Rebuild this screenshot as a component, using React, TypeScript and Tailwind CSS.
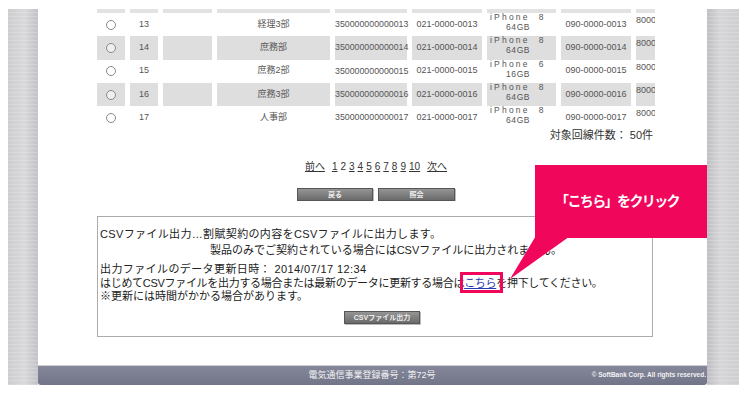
type Line = { no: number; dept: string; model: string; cap: string };

const lines: Line[] = [
  { no: 13, dept: "経理3部", model: "8", cap: "64GB" },
  { no: 14, dept: "庶務部", model: "8", cap: "64GB" },
  { no: 15, dept: "庶務2部", model: "6", cap: "16GB" },
  { no: 16, dept: "庶務3部", model: "8", cap: "64GB" },
  { no: 17, dept: "人事部", model: "8", cap: "64GB" },
];

const pad = (n: number) => String(n).padStart(4, "0");

function Row({ line }: { line: Line }) {
  const bg = line.no % 2 === 0 ? "bg-[#dedede]" : "bg-white";
  return (
    <div className="flex h-[23.3px] gap-[5px] text-[9px] text-[#555]">
      <div className={`${bg} flex w-[28px] shrink-0 items-center justify-center`}>
        <span className="h-[10px] w-[10px] rounded-full border border-[#8a8a8a] bg-white/50" />
      </div>
      <div className={`${bg} flex w-[28px] shrink-0 items-center justify-center`}>{line.no}</div>
      <div className={`${bg} w-[49px] shrink-0`} />
      <div className={`${bg} flex w-[113px] shrink-0 items-center justify-center`}>{line.dept}</div>
      <div className={`${bg} flex w-[72px] shrink-0 items-center whitespace-nowrap text-[8.8px]`}>
        3500000000000{String(line.no).padStart(2, "0")}
      </div>
      <div className={`${bg} flex w-[70px] shrink-0 items-center justify-center whitespace-nowrap`}>
        021-0000-{pad(line.no)}
      </div>
      <div className={`${bg} w-[69px] shrink-0 whitespace-nowrap text-[8.5px] leading-[10px]`}>
        <div className="-mt-[1px] pl-[3px] tracking-[2.2px]">iPhone&nbsp;&nbsp;{line.model}</div>
        <div className="pl-[19px] tracking-[0.6px]">{line.cap}</div>
      </div>
      <div className={`${bg} flex w-[70px] shrink-0 items-center justify-center whitespace-nowrap`}>
        090-0000-{pad(line.no)}
      </div>
      <div className={`${bg} w-[40px] shrink-0 whitespace-nowrap pt-[2px] leading-[10px]`}>80000</div>
    </div>
  );
}

function GrayButton({ label, width }: { label: string; width: string }) {
  return (
    <div
      className={`${width} flex h-[13px] items-center justify-center border border-[#555] bg-[linear-gradient(#959595,#6a6a6a)] text-[7px] font-bold leading-none text-[#eee] shadow-[1px_1px_0_#bbb]`}
    >
      {label}
    </div>
  );
}

const bandLeft =
  "bg-[repeating-linear-gradient(0deg,rgba(255,255,255,0.18)_0px,rgba(255,255,255,0.18)_1px,transparent_1px,transparent_4px),linear-gradient(90deg,#cdcdd0,#d9d9dc_55%,#c3c3c7)]";
const bandRight =
  "bg-[repeating-linear-gradient(0deg,rgba(255,255,255,0.18)_0px,rgba(255,255,255,0.18)_1px,transparent_1px,transparent_4px),linear-gradient(90deg,#bfbfc3,#d6d6d9_40%,#cfcfd2)]";

export default function App() {
  return (
    <div className="h-[396px] w-[750px] overflow-hidden bg-white pl-[8px] pt-[9px] font-['Liberation_Sans','Noto_Sans_CJK_JP',sans-serif]">
      <div className="flex h-[376px]">
        <div className={`${bandLeft} w-[30px] shrink-0`} />

        <div className="relative flex w-[669px] shrink-0 flex-col bg-white">
          <div className="flex-1">
            {/* table */}
            <div className="ml-[59px] w-[558px] overflow-hidden">
              <div className="flex h-[4px] gap-[5px]">
                {["w-[28px]", "w-[28px]", "w-[49px]", "w-[113px]", "w-[72px]", "w-[70px]", "w-[69px]", "w-[70px]", "w-[40px]"].map(
                  (w, i) => (
                    <div key={i} className={`${w} shrink-0 bg-[#e2e2e2]`} />
                  )
                )}
              </div>
              {lines.map((l) => (
                <Row key={l.no} line={l} />
              ))}
              <div className="pr-[2px] text-right text-[11px] leading-[12px] text-[#333]">対象回線件数： 50件</div>

              <div className="mt-[19px] flex items-center justify-center text-[10px] leading-[14px] text-[#333]">
                <span className="underline">前へ</span>
                <div className="ml-[7px] flex gap-[3px]">
                  {[1, 2, 3, 4, 5, 6, 7, 8, 9, 10].map((p) => (
                    <span key={p} className={p === 2 ? "" : "underline"}>
                      {p}
                    </span>
                  ))}
                </div>
                <span className="ml-[7px] underline">次へ</span>
              </div>

              <div className="mt-[14px] flex justify-center gap-[5px]">
                <GrayButton label="戻る" width="w-[76px]" />
                <GrayButton label="照会" width="w-[77px]" />
              </div>
            </div>

            {/* csv box */}
            <div className="ml-[59px] mt-[15px] w-[556px] border border-[#ababab] pb-[12px] pl-[2px] pt-[9px] text-[11px] text-[#222]">
              <p className="leading-[16px] tracking-[0.35px]">CSVファイル出力…割賦契約の内容をCSVファイルに出力します。</p>
              <p className="pl-[110px] leading-[16px]">製品のみでご契約されている場合にはCSVファイルに出力されません。</p>
              <div className="mt-[5px] leading-[13.5px]">
                <p className="tracking-[0.4px]">出力ファイルのデータ更新日時： 2014/07/17 12:34</p>
                <p className="tracking-[-0.3px]">
                  はじめてCSVファイルを出力する場合または最新のデータに更新する場合は
                  <span className="relative">
                    <span className="text-[#2a3cb4] underline">こちら</span>
                    <span className="absolute -bottom-[4px] -left-[4px] -right-[7px] -top-[5px] border-[3px] border-[#f0075c]" />
                  </span>
                  を押下してください。
                </p>
                <p>※更新には時間がかかる場合があります。</p>
              </div>
              <div className="mt-[7px] flex justify-center pl-[12px]">
                <GrayButton label="CSVファイル出力" width="w-[76px]" />
              </div>
            </div>
          </div>

          <div className="flex h-[20px] shrink-0 items-center rounded-b-[3px] border-t border-[#cfcfd3] bg-[linear-gradient(#85889a,#727587)] text-[#f2f2f5]">
            <div className="flex-1 basis-0" />
            <div className="text-[9px] leading-none">電気通信事業登録番号：第72号</div>
            <div className="flex flex-1 basis-0 justify-end pr-[1px] text-[6.5px] font-bold leading-none">
              © SoftBank Corp. All rights reserved.
            </div>
          </div>

          {/* callout */}
          <div className="absolute left-[497px] top-[156px] z-10 flex h-[73px] w-[172px] items-center justify-center bg-[#f0075c] pr-[8px] text-[14px] font-bold tracking-[-1.6px] text-white">
            「こちら」をクリック
          </div>
          <svg className="absolute left-[460px] top-[220px] z-10" width="90" height="60" viewBox="0 0 90 60">
            <polygon points="39,5 75,5 12,50" fill="#f0075c" />
          </svg>
        </div>

        <div className={`${bandRight} w-[32px] shrink-0`} />
      </div>
    </div>
  );
}
